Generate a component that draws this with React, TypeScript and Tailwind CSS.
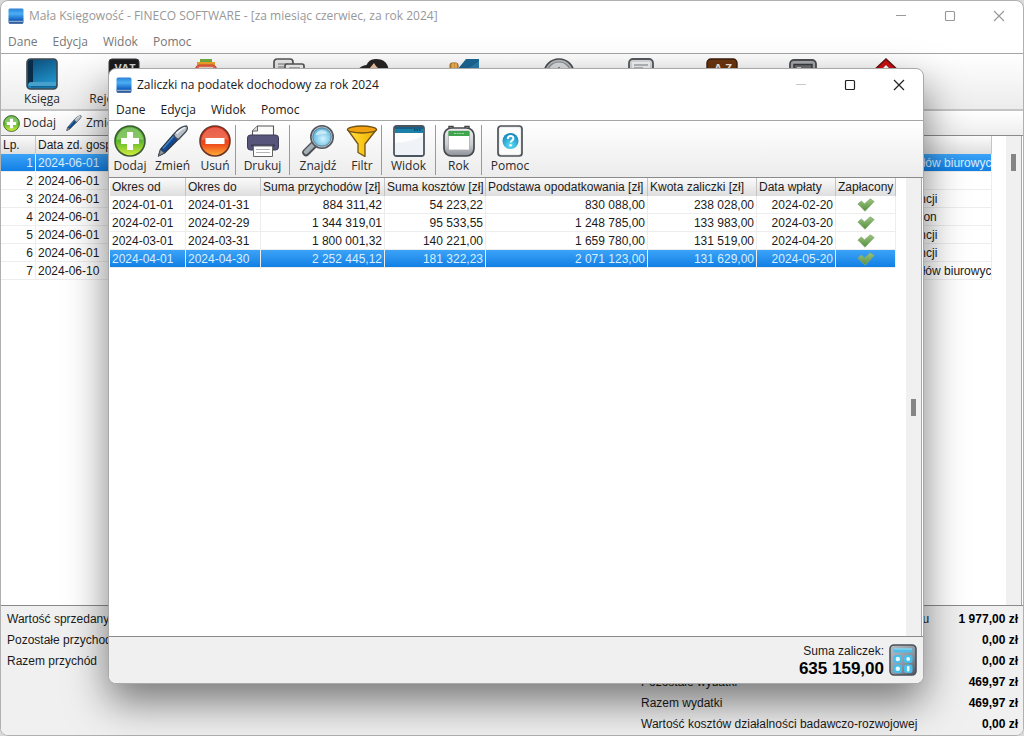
import React from 'react';

interface AdvanceRow {
  from: string;
  to: string;
  income: string;
  costs: string;
  base: string;
  advance: string;
  paidOn: string;
}

const ADVANCES: AdvanceRow[] = [
  { from: "2024-01-01", to: "2024-01-31", income: "884 311,42", costs: "54 223,22", base: "830 088,00", advance: "238 028,00", paidOn: "2024-02-20" },
  { from: "2024-02-01", to: "2024-02-29", income: "1 344 319,01", costs: "95 533,55", base: "1 248 785,00", advance: "133 983,00", paidOn: "2024-03-20" },
  { from: "2024-03-01", to: "2024-03-31", income: "1 800 001,32", costs: "140 221,00", base: "1 659 780,00", advance: "131 519,00", paidOn: "2024-04-20" },
  { from: "2024-04-01", to: "2024-04-30", income: "2 252 445,12", costs: "181 322,23", base: "2 071 123,00", advance: "131 629,00", paidOn: "2024-05-20" },
];

const ADVANCE_COLUMNS = [
  { label: "Okres od", width: "w-[76px]" },
  { label: "Okres do", width: "w-[75px]" },
  { label: "Suma przychodów [zł]", width: "w-[124px]" },
  { label: "Suma kosztów [zł]", width: "w-[101px]" },
  { label: "Podstawa opodatkowania [zł]", width: "w-[162px]" },
  { label: "Kwota zaliczki [zł]", width: "w-[109px]" },
  { label: "Data wpłaty", width: "w-[79px]" },
  { label: "Zapłacony", width: "w-[60px]" },
];

const BOOK_ENTRIES = [
  { date: "2024-06-01", note: "Zakup materiałów biurowych" },
  { date: "2024-06-01", note: "" },
  { date: "2024-06-01", note: "Koszt konferencji" },
  { date: "2024-06-01", note: "Opłata za telefon" },
  { date: "2024-06-01", note: "Koszt konferencji" },
  { date: "2024-06-01", note: "Koszt konferencji" },
  { date: "2024-06-10", note: "Zakup materiałów biurowych" },
];

const EXPENSES = [
  { label: "Zakup towarów handlowych/surowców wg cen zakupu", value: "1 977,00 zł" },
  { label: "Koszty uboczne zakupu", value: "0,00 zł" },
  { label: "Wynagrodzenia", value: "0,00 zł" },
  { label: "Pozostałe wydatki", value: "469,97 zł" },
  { label: "Razem wydatki", value: "469,97 zł" },
  { label: "Wartość kosztów działalności badawczo-rozwojowej", value: "0,00 zł" },
];

const MENU = ["Dane", "Edycja", "Widok", "Pomoc"];

const SELECTED = "bg-linear-to-b from-[#3ba3f7] to-[#0a7de4] text-[#d9efff]";

/* ---------- icons ---------- */

const BookIcon = ({ className }: { className: string }) => (
  <svg viewBox="0 0 32 32" className={className} aria-hidden="true">
    <defs>
      <linearGradient id="bookCover" x1="0" y1="0" x2="0.4" y2="1">
        <stop offset="0" stopColor="#0b4a75" />
        <stop offset="1" stopColor="#2193cc" />
      </linearGradient>
    </defs>
    <rect x="1" y="1" width="30" height="30" rx="3.500" fill="url(#bookCover)" stroke="#3b474f" strokeWidth="1.600" />
    <path d="M2 5a3 3 0 0 1 3-3h2v22H4l-2 2z" fill="#0a2c47" />
    <path d="M2.500 27a3.500 3.500 0 0 1 3.500-3h24v4H5z" fill="#5fb4dc" />
    <path d="M2.500 24h27.500v4.500H5z" fill="#2b84b5" opacity="0.450" />
    <path d="M5 28.800h25" stroke="#0c5486" strokeWidth="1.200" />
  </svg>
);

const AppIcon = () => (
  <svg viewBox="0 0 16 16" className="size-4" aria-hidden="true">
    <defs>
      <linearGradient id="appCover" x1="0" y1="0" x2="0" y2="1">
        <stop offset="0" stopColor="#2b82d6" />
        <stop offset="0.350" stopColor="#4aaef5" />
        <stop offset="0.750" stopColor="#1565c4" />
        <stop offset="1" stopColor="#0b3f91" />
      </linearGradient>
    </defs>
    <rect x="0.500" y="0.500" width="15" height="15" rx="1.500" fill="url(#appCover)" />
    <path d="M1 12.800h14v1.600H1z" fill="#8fa9c8" />
    <path d="M1 15h14" stroke="#0c3e86" strokeWidth="0.900" />
  </svg>
);

const AddIcon = ({ className }: { className: string }) => (
  <svg viewBox="0 0 32 32" className={className} aria-hidden="true">
    <defs>
      <linearGradient id="addFill" x1="0" y1="0" x2="0" y2="1">
        <stop offset="0" stopColor="#49a526" />
        <stop offset="0.500" stopColor="#5cb62b" />
        <stop offset="1" stopColor="#d6f03c" />
      </linearGradient>
    </defs>
    <circle cx="16" cy="16" r="15" fill="url(#addFill)" stroke="#3b5a35" strokeWidth="1.600" />
    <path d="M3 15a13 12.500 0 0 1 26 0q-13-4-26 0z" fill="#fff" opacity="0.280" />
    <path d="M13 7h6v6h6v6h-6v6h-6v-6H7v-6h6z" fill="#fff" />
  </svg>
);

const RemoveIcon = () => (
  <svg viewBox="0 0 32 32" className="size-8" aria-hidden="true">
    <defs>
      <linearGradient id="removeFill" x1="0" y1="0" x2="0" y2="1">
        <stop offset="0" stopColor="#e2301c" />
        <stop offset="0.600" stopColor="#ee4a1d" />
        <stop offset="1" stopColor="#ffae35" />
      </linearGradient>
    </defs>
    <circle cx="16" cy="16" r="15" fill="url(#removeFill)" stroke="#6b3527" strokeWidth="1.600" />
    <path d="M3 15a13 12.500 0 0 1 26 0q-13-4-26 0z" fill="#fff" opacity="0.220" />
    <rect x="6.500" y="13" width="19" height="6" fill="#fff" />
  </svg>
);

const PenIcon = ({ className }: { className: string }) => (
  <svg viewBox="0 0 32 32" className={className} aria-hidden="true">
    <path d="M1.500 31l2-6.500L16.500 9.500l5 4.500L7.500 28z" fill="#14498d" stroke="#2c3440" strokeWidth="1.300" strokeLinejoin="round" />
    <path d="M16.500 9.500C20 5 25 1.500 29.500 1c1.500 1 1 3.500-.5 5.500l-7.500 8c-2.500-1-4-2.500-5-5z" fill="#b7bec6" stroke="#454d56" strokeWidth="1.300" />
    <path d="M19.500 8.500c3-3 5.500-5 8.500-6" stroke="#eef1f4" strokeWidth="1.800" fill="none" />
    <path d="M6 23.500L16.500 11.500" stroke="#3f86cf" strokeWidth="1.500" />
    <path d="M1.500 31l2-6.500 4 3.500z" fill="#8c949c" stroke="#454d56" strokeWidth="0.800" />
  </svg>
);

const PrinterIcon = () => (
  <svg viewBox="0 0 32 32" className="size-8" aria-hidden="true">
    <path d="M5.500 11V6l5-5h16v10z" fill="#fafafa" stroke="#555" strokeWidth="1.100" />
    <path d="M5.500 6h5V1" fill="#ddd" stroke="#555" strokeWidth="0.900" />
    <path d="M0.500 13a3 3 0 0 1 3-3h25a3 3 0 0 1 3 3v9a3 3 0 0 1-3 3h-25a3 3 0 0 1-3-3z" fill="#57557c" stroke="#3c3b55" />
    <path d="M4 19.500h24v2H4z" fill="#3a3856" />
    <path d="M6.500 21h19v10.500h-19z" fill="#fff" stroke="#666" />
    <path d="M9 24.500h14M9 27.500h14" stroke="#b5b5b5" strokeWidth="1.200" />
  </svg>
);

const SearchIcon = () => (
  <svg viewBox="0 0 32 32" className="size-8" aria-hidden="true">
    <defs>
      <radialGradient id="lens" cx="0.550" cy="0.600" r="0.600">
        <stop offset="0" stopColor="#d3f4ff" />
        <stop offset="1" stopColor="#58b4dc" />
      </radialGradient>
    </defs>
    <path d="M12 19.500L4 27.500" stroke="#4a4f55" strokeWidth="7.500" strokeLinecap="round" />
    <path d="M12 19L4 27" stroke="#a5adb5" strokeWidth="4.500" strokeLinecap="round" />
    <circle cx="20" cy="12" r="11.200" fill="#c3ccd4" stroke="#52585e" strokeWidth="1.600" />
    <circle cx="20" cy="12" r="9.200" fill="url(#lens)" stroke="#5d7f92" />
    <path d="M13.500 10.500a6.500 6.500 0 0 1 12 -2q-6 0-12 2z" fill="#fff" opacity="0.550" />
  </svg>
);

const FunnelIcon = () => (
  <svg viewBox="0 0 32 32" className="size-8" aria-hidden="true">
    <defs>
      <linearGradient id="funnel" x1="0" y1="0" x2="1" y2="0">
        <stop offset="0" stopColor="#ffe14a" />
        <stop offset="0.500" stopColor="#fbc817" />
        <stop offset="1" stopColor="#eda80c" />
      </linearGradient>
    </defs>
    <path d="M1.500 4.500L12 19v8.500l7 4V19L30.500 4.500z" fill="url(#funnel)" stroke="#6f5418" strokeWidth="1.300" strokeLinejoin="round" />
    <ellipse cx="16" cy="4.500" rx="14.500" ry="3.500" fill="#f2a10f" stroke="#6f5418" strokeWidth="1.300" />
  </svg>
);

const ViewIcon = () => (
  <svg viewBox="0 0 32 32" className="size-8" aria-hidden="true">
    <rect x="1" y="1" width="30" height="30" rx="2.500" fill="#fdfdfe" stroke="#4b5560" strokeWidth="1.800" />
    <path d="M2 2h28v6H2z" fill="#1c7fa8" />
    <path d="M2 2h28v2H2z" fill="#175f84" />
    <path d="M21 5h7" stroke="#0d3e58" strokeWidth="1.500" strokeDasharray="1.500 1" />
    <path d="M2 30V18q14 0 28 -7v19z" fill="#e8edf2" opacity="0.700" />
  </svg>
);

const CalendarIcon = () => (
  <svg viewBox="0 0 32 32" className="size-8" aria-hidden="true">
    <defs>
      <linearGradient id="calBody" x1="0" y1="0" x2="0" y2="1">
        <stop offset="0" stopColor="#eeeff0" />
        <stop offset="0.600" stopColor="#c9cbce" />
        <stop offset="1" stopColor="#8b8f94" />
      </linearGradient>
    </defs>
    <path d="M6 4V1.500h4V4M22 4V1.500h4V4" stroke="#444" strokeWidth="1.400" fill="none" />
    <rect x="1" y="3" width="30" height="28" rx="7.500" fill="url(#calBody)" stroke="#45494e" strokeWidth="1.700" />
    <rect x="5.500" y="6" width="21" height="19" rx="1" fill="#fff" stroke="#a3a7ab" strokeWidth="0.700" />
    <path d="M5.500 6h21v5h-21z" fill="#3fa64e" />
    <path d="M11 8.500h10" stroke="#a5dbab" strokeWidth="1.200" strokeDasharray="2 0.700" />
  </svg>
);

const HelpIcon = () => (
  <svg viewBox="0 0 32 32" className="size-8" aria-hidden="true">
    <defs>
      <radialGradient id="helpBall" cx="0.500" cy="0.750" r="0.700">
        <stop offset="0" stopColor="#5fe0f7" />
        <stop offset="1" stopColor="#1687bf" />
      </radialGradient>
    </defs>
    <rect x="4" y="1" width="24" height="30" rx="3" fill="#eceef0" stroke="#4d5257" strokeWidth="1.700" />
    <rect x="6" y="3" width="20" height="26" rx="1.500" fill="#fcfcfd" />
    <circle cx="16.500" cy="16" r="8" fill="url(#helpBall)" />
    <path d="M13.800 14c0-4 5.600-3.800 5.600-.6 0 2-2.700 2-2.700 4.200" fill="none" stroke="#fff" strokeWidth="1.900" />
    <circle cx="16.600" cy="20.200" r="1.200" fill="#fff" />
  </svg>
);

const CheckIcon = () => (
  <svg viewBox="0 0 18 14" className="mx-auto h-3.5 w-[18px]" aria-hidden="true">
    <defs>
      <linearGradient id="tick" x1="0" y1="0" x2="0" y2="1">
        <stop offset="0" stopColor="#9cc47f" />
        <stop offset="1" stopColor="#548f3c" />
      </linearGradient>
    </defs>
    <path d="M0.800 6L4.300 3l3.200 2.800L13.300 0.800 17.200 3.500 8 13.300z" fill="url(#tick)" stroke="#86a878" strokeWidth="0.700" strokeLinejoin="round" />
  </svg>
);

const CalculatorIcon = () => (
  <svg viewBox="0 0 28 32" className="h-8 w-7" aria-hidden="true">
    <defs>
      <linearGradient id="calcBody" x1="0" y1="0" x2="1" y2="1">
        <stop offset="0" stopColor="#b9bfc7" />
        <stop offset="0.600" stopColor="#8c939c" />
        <stop offset="1" stopColor="#4d545e" />
      </linearGradient>
    </defs>
    <rect x="1" y="1" width="26" height="30" rx="4" fill="url(#calcBody)" stroke="#4b5159" strokeWidth="1.600" />
    <rect x="4.500" y="4.500" width="19" height="4" rx="1" fill="#4fbde8" />
    <path d="M5 5h18" stroke="#a2e3f8" strokeWidth="0.900" />
    <g fill="#48bdea">
      <rect x="4.500" y="11" width="8.500" height="8" rx="2.500" />
      <rect x="15" y="11" width="8.500" height="8" rx="2.500" />
      <rect x="4.500" y="20.500" width="8.500" height="8.500" rx="2.500" />
      <rect x="15" y="20.500" width="8.500" height="8.500" rx="2.500" />
    </g>
    <g fill="#e3fbff">
      <circle cx="8.800" cy="15" r="2.200" />
      <circle cx="19.200" cy="15" r="1.900" />
      <circle cx="8.800" cy="24.700" r="2.200" />
      <rect x="17.900" y="22" width="2.600" height="5.500" rx="1" />
    </g>
  </svg>
);

const VatIcon = () => (
  <svg viewBox="0 0 32 32" className="size-8" aria-hidden="true">
    <rect x="1" y="1" width="30" height="30" rx="3" fill="#1c1c1e" stroke="#3a3a3c" />
    <text x="17" y="14" textAnchor="middle" fontSize="11" fontWeight="700" fill="#d6d6d6">VAT</text>
  </svg>
);

const CashIcon = () => (
  <svg viewBox="0 0 32 32" className="size-8" aria-hidden="true">
    <path d="M10 1h12v4H10z" fill="#6fae3f" />
    <path d="M7 4h18v3H7z" fill="#f0a32c" />
    <path d="M5 12q1-5 4-5h14q3 0 4 5v18H5z" fill="#ef7054" stroke="#d5492e" />
    <path d="M9 9h14v5H9z" fill="#f6d9cf" />
  </svg>
);

const DocumentsIcon = () => (
  <svg viewBox="0 0 32 32" className="size-8" aria-hidden="true">
    <rect x="1" y="1" width="19" height="24" rx="3" fill="#e9e9e9" stroke="#555" strokeWidth="1.700" />
    <path d="M5 6h10M5 9h6" stroke="#999" strokeWidth="1.400" />
    <path d="M14 6h15q2 0 2 2v21q0 2-2 2H14q-2 0-2-2V8q0-2 2-2z" fill="#f4f4f4" stroke="#555" strokeWidth="1.700" />
    <path d="M16 10h11" stroke="#999" strokeWidth="1.400" />
  </svg>
);

const PeopleIcon = () => (
  <svg viewBox="0 0 32 32" className="size-8" aria-hidden="true">
    <path d="M1 12q3-5 10-5v17H1z" fill="#2a2725" />
    <path d="M8 14Q9 1 19 1q12 0 13 13v10H8z" fill="#272423" />
    <path d="M10 13Q14 9 17 5q3 6 10 8v9H10z" fill="#f2c9a0" />
  </svg>
);

const WalletIcon = () => (
  <svg viewBox="0 0 32 32" className="size-8" aria-hidden="true">
    <rect x="2" y="5" width="8" height="12" rx="2" fill="#e19a35" stroke="#a0651a" />
    <path d="M5 5v12M8 5v12" stroke="#f7d08c" />
    <path d="M9 12L18 1h13v28H9z" fill="#1b6794" />
    <path d="M18 12L31 3v9z" fill="#2a7fac" />
  </svg>
);

const ClockIcon = () => (
  <svg viewBox="0 0 32 32" className="size-8" aria-hidden="true">
    <circle cx="16" cy="16" r="15" fill="#b9bcc0" stroke="#4b4e52" strokeWidth="1.700" />
    <circle cx="16" cy="16" r="12" fill="#dcdddf" stroke="#8a8c8f" strokeWidth="1.200" />
    <path d="M16 9v7l6 3" stroke="#666" strokeWidth="1.500" fill="none" />
  </svg>
);

const NoteIcon = () => (
  <svg viewBox="0 0 32 32" className="size-8" aria-hidden="true">
    <rect x="4" y="1" width="24" height="30" rx="4" fill="#d8dadc" stroke="#55585c" strokeWidth="1.800" />
    <rect x="7" y="4" width="18" height="24" fill="#f4f5f6" />
    <path d="M9 7h14M9 10h9" stroke="#a1a5a9" strokeWidth="1.400" />
  </svg>
);

const DictionaryIcon = () => (
  <svg viewBox="0 0 32 32" className="size-8" aria-hidden="true">
    <rect x="1" y="1" width="30" height="30" rx="4" fill="#6b3410" stroke="#3b1d0a" strokeWidth="1.400" />
    <text x="17" y="13.500" textAnchor="middle" fontSize="11" fontWeight="700" fill="#f3e6d8">A-Z</text>
  </svg>
);

const SafeIcon = () => (
  <svg viewBox="0 0 32 32" className="size-8" aria-hidden="true">
    <rect x="3" y="2" width="26" height="28" rx="4" fill="#a6a8ab" stroke="#4c4e51" strokeWidth="1.800" />
    <rect x="7" y="6.500" width="18" height="19" fill="#6c6e71" stroke="#3a3c3e" strokeWidth="1.500" />
    <path d="M10 9h4v4h-4z" fill="#cfd1d3" />
  </svg>
);

const HomeIcon = () => (
  <svg viewBox="0 0 32 32" className="size-8" aria-hidden="true">
    <path d="M5 14h22v16H5z" fill="#eee" stroke="#666" />
    <path d="M16 1L1 15l4 3L16 8l11 10 4-3z" fill="#cf0f12" stroke="#5c1110" strokeWidth="1.500" />
    <path d="M16 7l-8 8h16z" fill="#fff" />
  </svg>
);

/* ---------- shared parts ---------- */

const WindowControls = ({ className, minimizeClass }: { className: string; minimizeClass: string }) => (
  <div className={`ml-auto flex h-full ${className}`}>
    <button type="button" aria-label="Minimalizuj" className={`flex w-[49px] items-center justify-center ${minimizeClass}`}>
      <svg viewBox="0 0 12 12" className="size-3"><path d="M1 5.500h10" stroke="currentColor" /></svg>
    </button>
    <button type="button" aria-label="Maksymalizuj" className="flex w-[49px] items-center justify-center">
      <svg viewBox="0 0 12 12" className="size-3">
        <rect x="1.500" y="1.500" width="9" height="9" rx="1" fill="none" stroke="currentColor" strokeWidth="1.200" />
      </svg>
    </button>
    <button type="button" aria-label="Zamknij" className="flex w-[49px] items-center justify-center">
      <svg viewBox="0 0 12 12" className="size-3">
        <path d="M1 1l10 10M11 1L1 11" stroke="currentColor" strokeWidth="1.200" />
      </svg>
    </button>
  </div>
);

const MenuBar = ({ className }: { className: string }) => (
  <nav className={`flex items-center gap-[15px] px-[7px] ${className}`}>
    {MENU.map((item) => (
      <button key={item} type="button">{item}</button>
    ))}
  </nav>
);

interface ToolButtonProps {
  label: string;
  width: string;
  iconOnly?: boolean;
  children: React.ReactNode;
}

const ToolButton = ({ label, width, iconOnly, children }: ToolButtonProps) => (
  <button type="button" aria-label={label} className={`flex shrink-0 flex-col items-center whitespace-nowrap ${width}`}>
    {children}
    {!iconOnly && <span className="leading-[18px]">{label}</span>}
  </button>
);

const Separator = ({ className = "" }: { className?: string }) => (
  <div className={`h-[50px] w-px shrink-0 bg-[#9a9a9a] ${className}`} />
);

const Scrollbar = ({ thumb }: { thumb: string }) => (
  <div className={`flex w-4 shrink-0 flex-col items-center border-r border-[#a8a8a8] bg-[#f0f0f0] ${thumb}`}>
    <div className="h-[17px] w-[5px] bg-[#858585]" />
  </div>
);

const HEAD_CELL = "h-[18px] overflow-hidden border-r border-[#c4c4c4] bg-linear-to-b from-[#fbfbfb] to-[#dedede] p-0 px-0.5 text-left font-normal whitespace-nowrap";
const CELL = "h-[18px] overflow-hidden border-r border-b border-[#ededed] p-0 px-0.5 pt-px leading-4 whitespace-nowrap";

/* ---------- main window ---------- */

const BookTable = () => (
  <table className="w-full table-fixed border-separate border-spacing-0 text-[#1b1b1b]">
    <thead>
      <tr>
        <th className={`w-[35px] ${HEAD_CELL}`}>Lp.</th>
        <th className={`w-[110px] ${HEAD_CELL}`}>Data zd. gospod.</th>
        <th className={HEAD_CELL} />
        <th className={`w-[148px] ${HEAD_CELL}`} />
      </tr>
    </thead>
    <tbody>
      {BOOK_ENTRIES.map((entry, i) => (
        <tr key={i} className={i === 0 ? SELECTED : ""}>
          <td className={`${CELL} text-right`}>{i + 1}</td>
          <td className={CELL}>{entry.date}</td>
          <td className={CELL} />
          <td className={CELL}>{entry.note}</td>
        </tr>
      ))}
    </tbody>
  </table>
);

const MainWindow = () => (
  <div className="flex min-h-screen flex-col overflow-hidden rounded-lg border border-[#b0b0b0] bg-white">
    <header className="flex h-[30px] items-center pl-[7px] text-[#989898]">
      <AppIcon />
      <h1 className="ml-[5px]">Mała Księgowość - FINECO SOFTWARE - [za miesiąc czerwiec, za rok 2024]</h1>
      <WindowControls className="text-[#9a9a9a]" minimizeClass="" />
    </header>
    <MenuBar className="h-[22px] text-[#787878]" />

    <div className="flex h-[58px] items-start border-t border-b-2 border-t-[#a5a5a5] border-b-[#c4c4c4] bg-linear-to-b from-white to-[#ececec] pt-1 text-[#2a2a2a]">
      <ToolButton label="Księga" width="w-[82px]"><BookIcon className="size-8" /></ToolButton>
      <ToolButton label="Rejestry VAT" width="w-[82px]"><VatIcon /></ToolButton>
      <ToolButton label="Kasa" width="w-[82px]" iconOnly><CashIcon /></ToolButton>
      <ToolButton label="Dokumenty" width="w-[84px]" iconOnly><DocumentsIcon /></ToolButton>
      <ToolButton label="Kontrahenci" width="w-[84px]" iconOnly><PeopleIcon /></ToolButton>
      <ToolButton label="Rozrachunki" width="w-[98px]" iconOnly><WalletIcon /></ToolButton>
      <ToolButton label="Terminy" width="w-[92px]" iconOnly><ClockIcon /></ToolButton>
      <ToolButton label="Notatki" width="w-[72px]" iconOnly><NoteIcon /></ToolButton>
      <ToolButton label="Słowniki" width="w-[90px]" iconOnly><DictionaryIcon /></ToolButton>
      <ToolButton label="Archiwum" width="w-[72px]" iconOnly><SafeIcon /></ToolButton>
      <ToolButton label="Wyjście" width="w-[94px]" iconOnly><HomeIcon /></ToolButton>
    </div>

    <div className="flex h-6 items-center gap-2.5 bg-linear-to-b from-white to-[#ededed] pl-0.5 text-[#2a2a2a]">
      <button type="button" className="flex items-center gap-[3px]"><AddIcon className="size-[17px]" />Dodaj</button>
      <button type="button" className="flex items-center gap-1"><PenIcon className="size-4" />Zmień</button>
    </div>

    <div className="flex min-h-[471px] grow border-y border-[#8a8a8a] pr-px font-['Liberation_Sans',Arial,sans-serif]">
      <div className="min-w-0 grow pr-3.5"><BookTable /></div>
      <Scrollbar thumb="pt-[18px]" />
    </div>

    <footer className="flex h-[129px] justify-between bg-[#f0f0f0] px-[5px] pt-[3px] font-['Liberation_Sans',Arial,sans-serif] leading-[21px] text-[#1b1b1b]">
      <ul className="pl-px">
        <li>Wartość sprzedanych towarów</li>
        <li>Pozostałe przychody</li>
        <li>Razem przychód</li>
      </ul>
      <dl className="w-[377px]">
        {EXPENSES.map((item) => (
          <div key={item.label} className="flex justify-between whitespace-nowrap">
            <dt>{item.label}</dt>
            <dd className="font-bold text-black">{item.value}</dd>
          </div>
        ))}
      </dl>
    </footer>
  </div>
);

/* ---------- tax advances window ---------- */

const AdvancesTable = () => (
  <table className="w-[786px] table-fixed border-separate border-spacing-0 text-[#1b1b1b]">
    <thead>
      <tr>
        {ADVANCE_COLUMNS.map((col) => (
          <th key={col.label} className={`${col.width} ${HEAD_CELL}`}>{col.label}</th>
        ))}
      </tr>
    </thead>
    <tbody>
      {ADVANCES.map((row, i) => (
        <tr key={row.from} className={i === ADVANCES.length - 1 ? SELECTED : ""}>
          <td className={CELL}>{row.from}</td>
          <td className={CELL}>{row.to}</td>
          <td className={`${CELL} text-right`}>{row.income}</td>
          <td className={`${CELL} text-right`}>{row.costs}</td>
          <td className={`${CELL} text-right`}>{row.base}</td>
          <td className={`${CELL} text-right`}>{row.advance}</td>
          <td className={`${CELL} text-right`}>{row.paidOn}</td>
          <td className={CELL}><CheckIcon /></td>
        </tr>
      ))}
    </tbody>
  </table>
);

const AdvancesWindow = () => (
  <section
    role="dialog"
    aria-labelledby="advances-title"
    className="absolute top-[68px] right-[100px] bottom-[52px] left-[108px] flex flex-col overflow-hidden rounded-lg border border-[#a9a9a9] bg-white shadow-[0_18px_40px_rgba(0,0,0,0.5)]"
  >
    <header className="flex h-[31px] shrink-0 items-center pl-[7px] text-[#1a1a1a]">
      <AppIcon />
      <h2 id="advances-title" className="ml-[5px]">Zaliczki na podatek dochodowy za rok 2024</h2>
      <WindowControls className="text-[#222]" minimizeClass="text-[#c8c8c8]" />
    </header>
    <MenuBar className="h-5 shrink-0 text-[#1a1a1a]" />

    <div className="flex h-[58px] shrink-0 items-start border-y border-t-[#a5a5a5] border-b-[#8a8a8a] bg-linear-to-b from-white to-[#ececec] pt-1 pl-px text-[#2a2a2a]">
      <ToolButton label="Dodaj" width="w-10"><AddIcon className="size-8" /></ToolButton>
      <ToolButton label="Zmień" width="w-[45px]"><PenIcon className="size-8" /></ToolButton>
      <ToolButton label="Usuń" width="w-10"><RemoveIcon /></ToolButton>
      <Separator />
      <ToolButton label="Drukuj" width="w-[53px]"><PrinterIcon /></ToolButton>
      <Separator />
      <ToolButton label="Znajdź" width="w-14"><SearchIcon /></ToolButton>
      <ToolButton label="Filtr" width="w-8"><FunnelIcon /></ToolButton>
      <Separator className="ml-[3px]" />
      <ToolButton label="Widok" width="w-[53px]"><ViewIcon /></ToolButton>
      <Separator />
      <ToolButton label="Rok" width="w-[45px]"><CalendarIcon /></ToolButton>
      <Separator />
      <ToolButton label="Pomoc" width="w-14"><HelpIcon /></ToolButton>
    </div>

    <div className="flex min-h-0 grow border-b border-[#8a8a8a] pr-px pl-px font-['Liberation_Sans',Arial,sans-serif]">
      <div className="min-w-0 grow overflow-hidden"><AdvancesTable /></div>
      <Scrollbar thumb="justify-center" />
    </div>

    <footer className="flex h-[46px] shrink-0 items-center justify-end gap-[5px] bg-[#f0f0f0] pr-1.5 text-right font-['Liberation_Sans',Arial,sans-serif]">
      <p className="leading-[17px] text-[#1b1b1b]">
        Suma zaliczek:
        <strong className="block text-[17px] text-black">635 159,00</strong>
      </p>
      <button type="button" aria-label="Kalkulator"><CalculatorIcon /></button>
    </footer>
  </section>
);

export default function App() {
  return (
    <main className="relative bg-[#d9d9d9] font-['Open_Sans','Noto_Sans',sans-serif] text-[12px]">
      <MainWindow />
      <AdvancesWindow />
    </main>
  );
}
